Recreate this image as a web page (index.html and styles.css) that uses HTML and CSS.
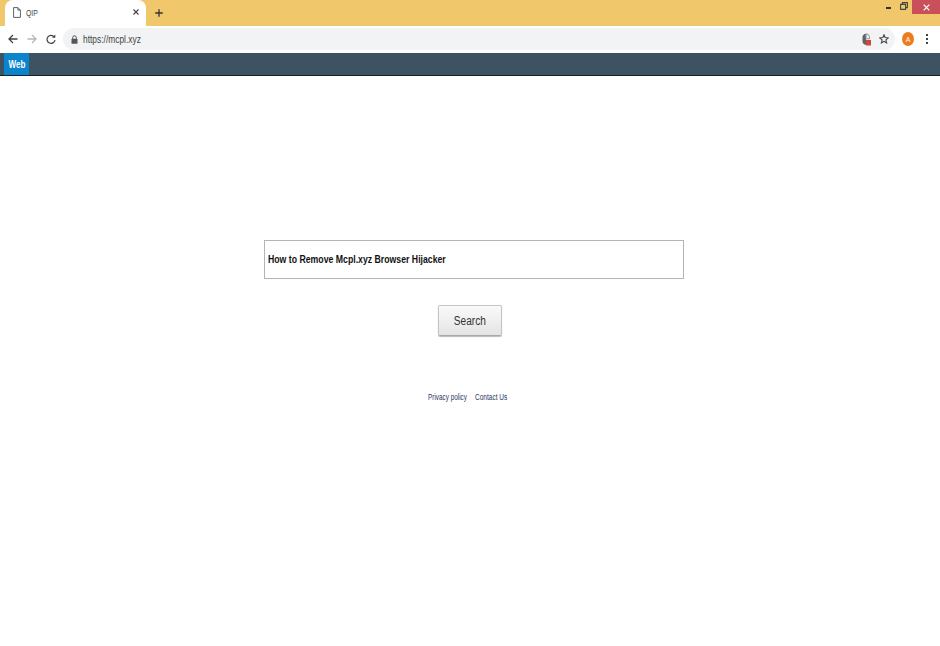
FILE: index.html
```html
<!DOCTYPE html>
<html lang="en">
<head>
<meta charset="utf-8">
<title>QIP</title>
<link rel="stylesheet" href="styles.css">
</head>
<body>
<header class="tabstrip">
  <div class="tab">
    <svg class="tab-doc" width="8" height="11" viewBox="0 0 8 11"><path d="M.6.6h4.300l2.500 2.500v7.300H.6z M4.900.6v2.500h2.500" fill="none" stroke="#5f6368" stroke-width="1"/></svg>
    <span class="tab-title">QIP</span>
    <svg class="tab-close" width="6" height="6" viewBox="0 0 6 6"><path d="M.5.5l5 5M5.500.5l-5 5" stroke="#444" stroke-width="1.100"/></svg>
  </div>
  <svg class="new-tab" width="8" height="8" viewBox="0 0 8 8"><path d="M4 .2v7.600M.2 4h7.600" stroke="#333" stroke-width="1.300"/></svg>
  <div class="window-controls">
    <span class="win-min"></span>
    <svg class="win-restore" width="8" height="8" viewBox="0 0 8 8"><path d="M.6 2.400h5v5h-5z M2.400 2.400V.6h5v5H5.600" fill="none" stroke="#444" stroke-width="1.100"/></svg>
    <span class="win-close"><svg width="7" height="7" viewBox="0 0 7 7"><path d="M.7.7l5.600 5.600M6.300.7L.7 6.300" stroke="#fff" stroke-width="1.200"/></svg></span>
  </div>
</header>
<div class="toolbar">
  <svg class="nav-icon" width="10" height="10" viewBox="0 0 10 10"><path d="M9.500 5H1.300M5 1L1 5l4 4" fill="none" stroke="#444" stroke-width="1.300"/></svg>
  <svg class="nav-icon" width="10" height="10" viewBox="0 0 10 10"><path d="M.5 5h8.200M5 1l4 4-4 4" fill="none" stroke="#b4b6b8" stroke-width="1.300"/></svg>
  <svg class="nav-icon" width="10" height="10" viewBox="0 0 10 10"><path d="M8.300 3A4 4 0 1 0 9 6" fill="none" stroke="#444" stroke-width="1.200"/><path d="M9.300.6v3.200H6.100z" fill="#444"/></svg>
  <div class="omnibox">
    <svg class="lock" width="7" height="9" viewBox="0 0 7 9"><path d="M1.700 4V2.600a1.800 1.800 0 0 1 3.600 0V4" fill="none" stroke="#555" stroke-width="1"/><rect x=".5" y="3.800" width="6" height="5" rx=".6" fill="#555"/></svg>
    <span class="url">https://mcpl.xyz</span>
    <svg class="ext" width="9" height="13" viewBox="0 0 9 13"><path d="M4 .8a3.800 3.800 0 0 0-3.500 4v3a3.800 3.800 0 0 0 3.500 4z" fill="#5f6368"/><path d="M4 .8a3.800 3.800 0 0 1 3.500 3v2H4z" fill="none" stroke="#8a8d90" stroke-width="1"/><rect x="4" y="7" width="5" height="5.500" fill="#d2453f"/></svg>
    <svg class="star" width="10" height="10" viewBox="0 0 10 10"><path d="M5 .8l1.200 2.800 3 .3-2.300 2 .7 3L5 7.300 2.400 8.900l.7-3-2.300-2 3-.3z" fill="none" stroke="#444" stroke-width="1.100"/></svg>
  </div>
  <span class="avatar">A</span>
  <span class="menu-dots"><i></i><i></i><i></i></span>
</div>
<nav class="sitebar"><a class="web-tab"><span class="web-label">Web</span></a></nav>
<main class="page">
  <form class="search">
    <div class="search-input"><span class="query">How to Remove Mcpl.xyz Browser Hijacker</span></div>
    <div class="search-action"><button class="search-button" type="button"><span class="search-label">Search</span></button></div>
  </form>
  <footer class="links"><a class="link-privacy">Privacy policy</a><a class="link-contact">Contact Us</a></footer>
</main>
</body>
</html>
```
FILE: styles.css
```css
* { box-sizing: border-box; }
html, body { margin: 0; padding: 0; height: 100%; background: #fff; overflow: hidden; font-family: "Liberation Sans", Arial, sans-serif; }

.tabstrip { height: 26px; background: #f1c76b; display: flex; align-items: center; padding-left: 5px; }
.tab { width: 141px; height: 26px; background: #fff; border-radius: 8px 8px 0 0; display: flex; align-items: center; padding: 0 7px 2px 8px; }
.tab-doc { flex: none; }
.tab-title { font-size: 9.5px; color: #444; margin-left: 5px; flex: 1; transform: scaleX(.72); transform-origin: left; }
.tab-close { flex: none; }
.new-tab { margin-left: 9px; }
.window-controls { margin-left: auto; height: 26px; display: flex; align-items: flex-start; }
.win-min { width: 5px; height: 2px; background: #333; margin-top: 7px; }
.win-restore { margin: 2px 0 0 9px; }
.win-close { width: 28px; height: 14px; background: #c9505a; margin-left: 4px; display: flex; align-items: center; justify-content: center; }

.toolbar { height: 27px; background: #fff; display: flex; align-items: center; padding: 0 8px 1px 8px; }
.nav-icon { margin-right: 9px; flex: none; }
.nav-icon:nth-child(3) { margin-right: 7px; }
.omnibox { width: 832px; height: 22px; background: #f1f3f4; border-radius: 11px; display: flex; align-items: center; padding: 0 5px 0 8px; }
.lock { flex: none; }
.url { font-size: 10px; color: #444; margin-left: 5px; flex: 1; transform: scaleX(.84); transform-origin: left; }
.ext { margin-right: 8px; }
.star { margin-right: 1px; }
.avatar { width: 12px; height: 14px; border-radius: 50%; background: #ee7a1e; color: #fff; font-size: 7px; display: flex; align-items: center; justify-content: center; margin-left: 7px; flex: none; }
.menu-dots { display: flex; flex-direction: column; gap: 2px; margin-left: 12px; }
.menu-dots i { width: 2px; height: 2px; background: #444; display: block; }

.sitebar { height: 23px; background: #3d5361; border-bottom: 1px solid #14202a; padding-left: 4px; display: flex; }
.web-tab { width: 25px; height: 22px; background: #0a84cc; color: #fff; display: flex; align-items: center; justify-content: center; }
.web-label { font-size: 10.500px; font-weight: bold; transform: scaleX(.77); }

.page { padding: 164px 0 0 264px; }
.search { width: 420px; }
.search-input { height: 39px; border: 1px solid #b4b4b4; background: #fff; padding: 0 0 2px 3px; display: flex; align-items: center; }
.query { font-size: 10.500px; font-weight: bold; color: #111; white-space: nowrap; transform: scaleX(.83); transform-origin: left; }
.search-action { display: flex; justify-content: flex-start; padding: 26px 0 0 174px; }
.search-button { width: 64px; height: 31px; border: 1px solid #c4c4c4; border-bottom-color: #a8a8a8; border-radius: 2px; background: linear-gradient(#fafafa, #e4e4e4); box-shadow: 0 1px 1px #bbb; font-family: inherit; color: #333; padding: 0; }
.search-label { display: inline-block; font-size: 12.500px; transform: scaleX(.81); }
.links { display: flex; gap: 8px; padding: 56px 0 0 164px; font-size: 8.500px; color: #2b3560; }
.links a { display: block; white-space: nowrap; transform-origin: left; }
.link-privacy { width: 39px; transform: scaleX(.75); }
.link-contact { width: 32px; transform: scaleX(.77); }
```
